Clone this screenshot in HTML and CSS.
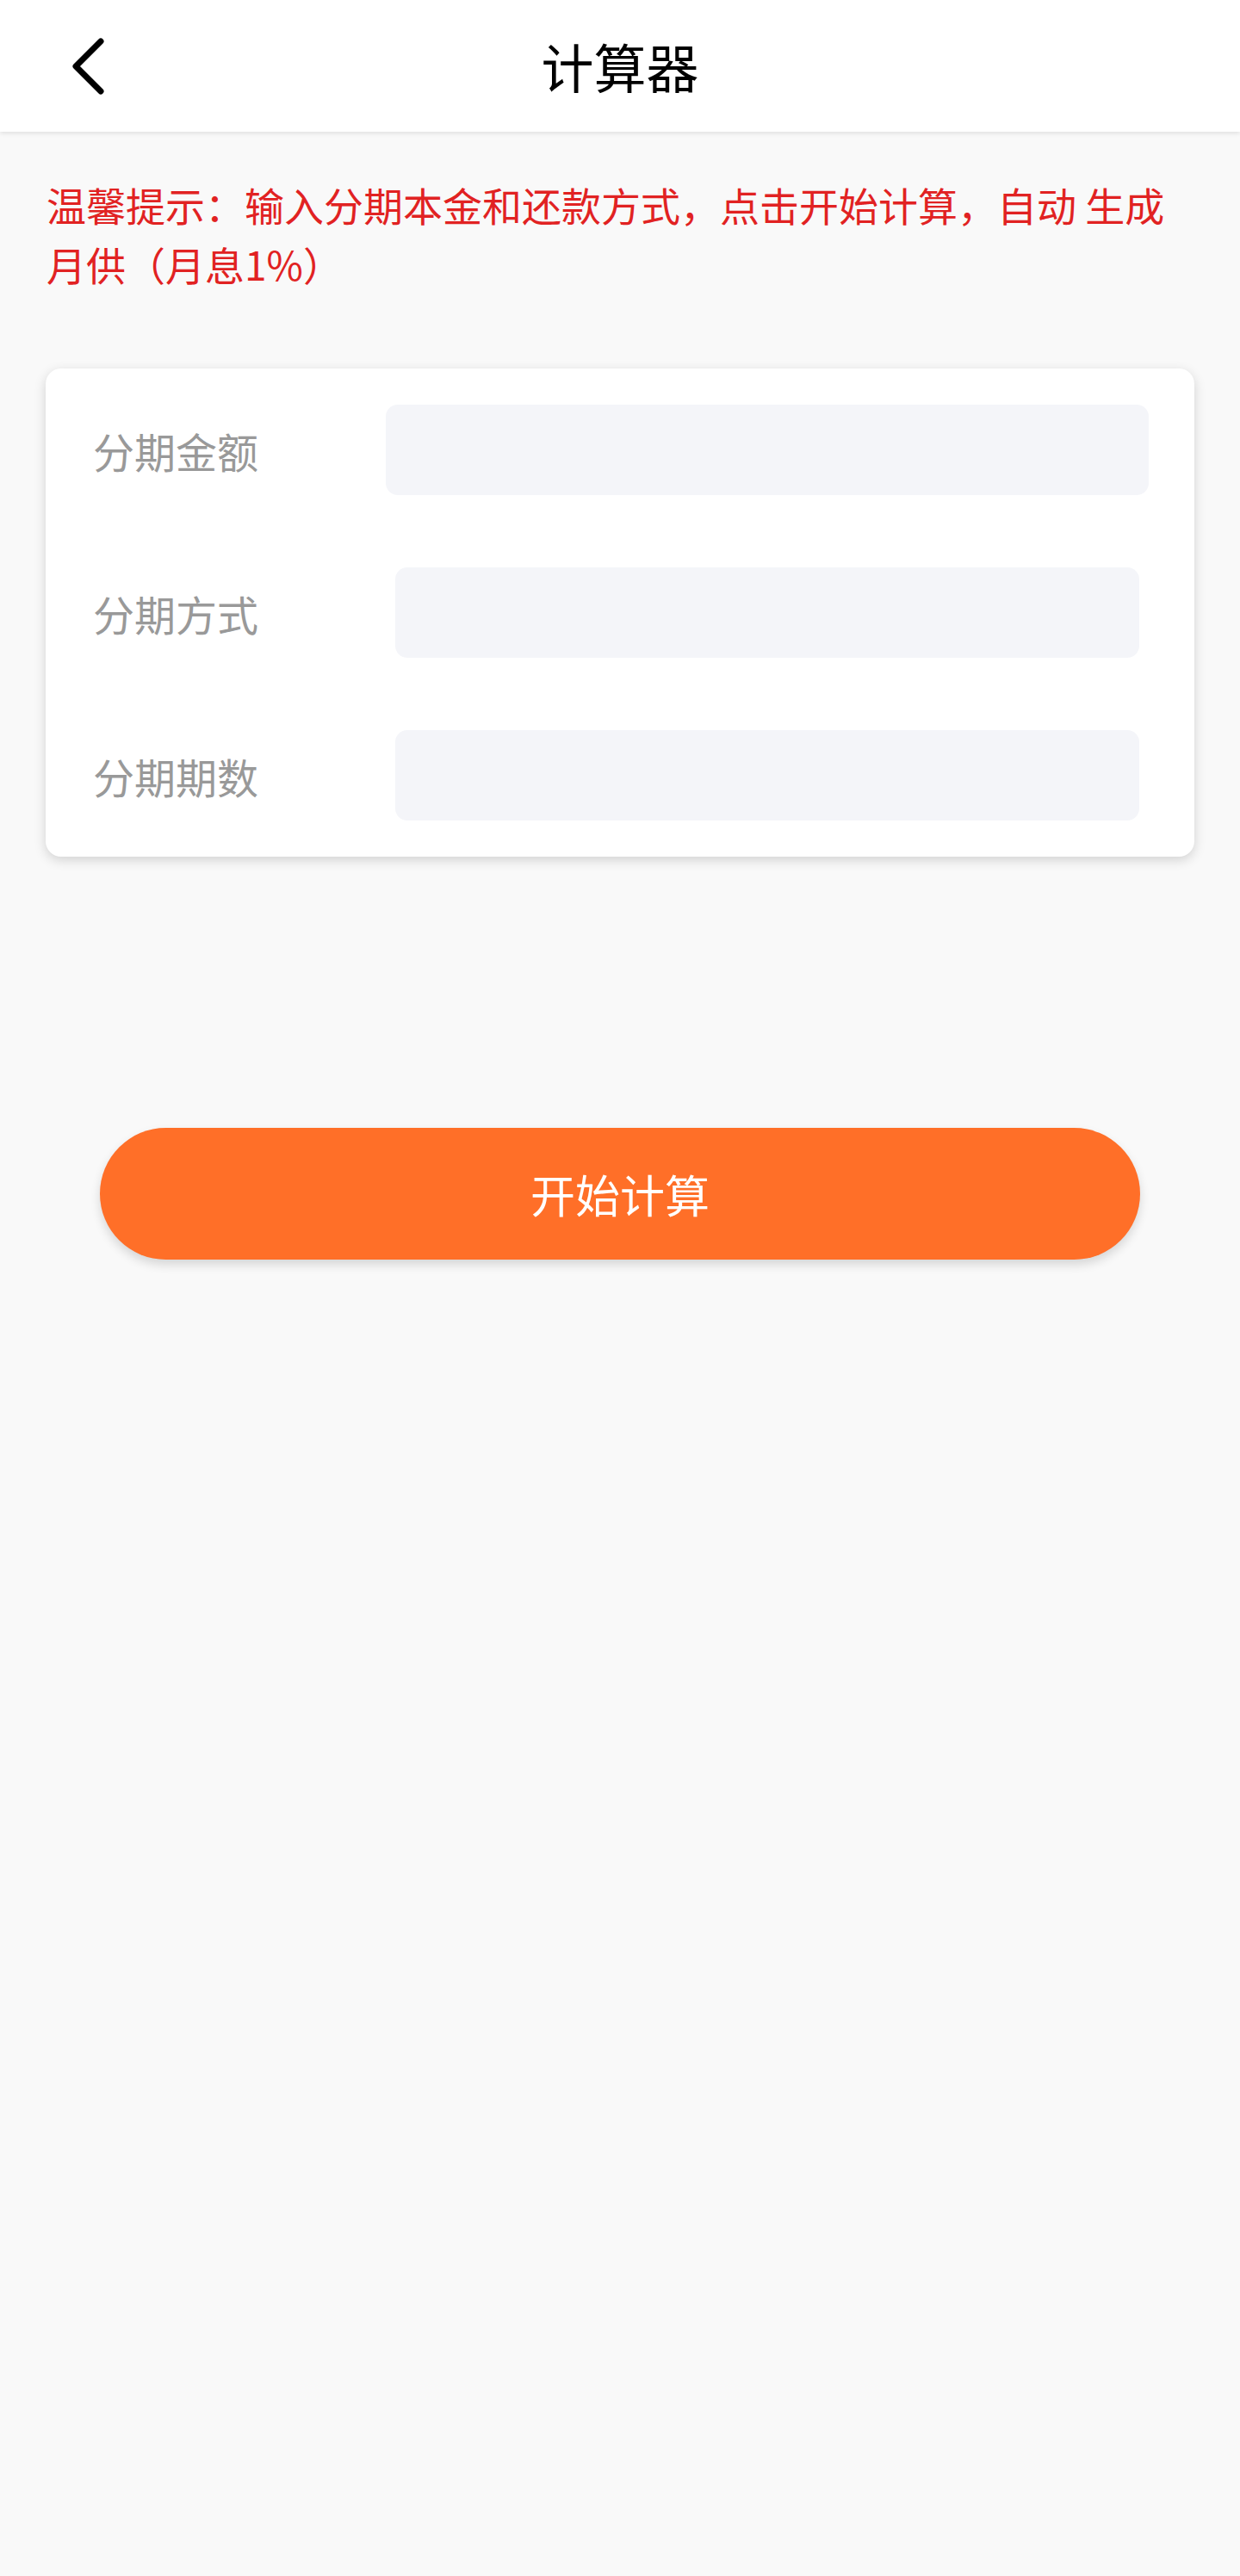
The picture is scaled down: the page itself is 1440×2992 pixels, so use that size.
FILE: index.html
```html
<!DOCTYPE html>
<html lang="zh-CN">
<head>
<meta charset="utf-8">
<title>计算器</title>
<link rel="stylesheet" href="styles.css">
</head>
<body>
<header class="topbar">
  <div class="topbar-left">
    <svg class="back-icon" width="40" height="72" viewBox="0 0 40 72" aria-hidden="true">
      <polyline points="33,7 4,36 33,65" fill="none" stroke="#000" stroke-width="7" stroke-linecap="round" stroke-linejoin="round"/>
    </svg>
  </div>
  <h1 class="topbar-title">计算器</h1>
  <div class="topbar-right"></div>
</header>

<p class="tip">温馨提示：输入分期本金和还款方式，点击开始计算，自动 生成月供（月息1%）</p>

<section class="card">
  <div class="row">
    <span class="label">分期金额</span>
    <div class="field"></div>
  </div>
  <div class="row row-inset">
    <span class="label">分期方式</span>
    <div class="field"></div>
  </div>
  <div class="row row-inset">
    <span class="label">分期期数</span>
    <div class="field"></div>
  </div>
</section>

<div class="action">
  <button class="btn-calc" type="button">开始计算</button>
</div>
</body>
</html>
```

FILE: styles.css
```css
html, body {
  margin: 0;
  padding: 0;
}
body {
  background: #f9f9f9;
  min-height: 2992px;
  font-family: "Noto Sans CJK SC", "Noto Sans", sans-serif;
}

.topbar {
  height: 153px;
  background: #ffffff;
  display: grid;
  grid-template-columns: 1fr auto 1fr;
  align-items: center;
  box-shadow: 0 2px 5px rgba(0, 0, 0, 0.1);
  position: relative;
  z-index: 1;
}
.topbar-left {
  display: flex;
  align-items: center;
  padding-left: 84px;
}
.back-icon {
  display: block;
}
.topbar-title {
  margin: 0;
  font-size: 61px;
  font-weight: 400;
  color: #000000;
  line-height: 1;
}

.tip {
  margin: 50px 0 0 0;
  padding: 0 55px 0 54px;
  font-size: 46px;
  line-height: 69px;
  color: #e12222;
}

.card {
  margin: 87px 53px 0 53px;
  padding: 42px 0;
  background: #ffffff;
  border-radius: 18px;
  box-shadow: 0 4px 14px rgba(0, 0, 0, 0.16);
  display: flex;
  flex-direction: column;
  gap: 84px;
}
.row {
  display: flex;
  align-items: center;
  padding: 0 53px 0 55px;
}
.label {
  flex: 0 0 340px;
  font-size: 48px;
  line-height: 1;
  color: #999999;
}
.field {
  flex: 1;
  height: 105px;
  background: #f4f5f9;
  border-radius: 14px;
}
.row-inset .field {
  margin: 0 11px;
}

.action {
  padding: 315px 116px 0 116px;
}
.btn-calc {
  display: block;
  width: 100%;
  height: 153px;
  border: none;
  border-radius: 77px;
  background: #ff6f28;
  color: #ffffff;
  font-family: "Noto Sans CJK SC", "Noto Sans", sans-serif;
  font-size: 52px;
  box-shadow: 0 6px 12px rgba(0, 0, 0, 0.14);
  padding: 0;
}
```
